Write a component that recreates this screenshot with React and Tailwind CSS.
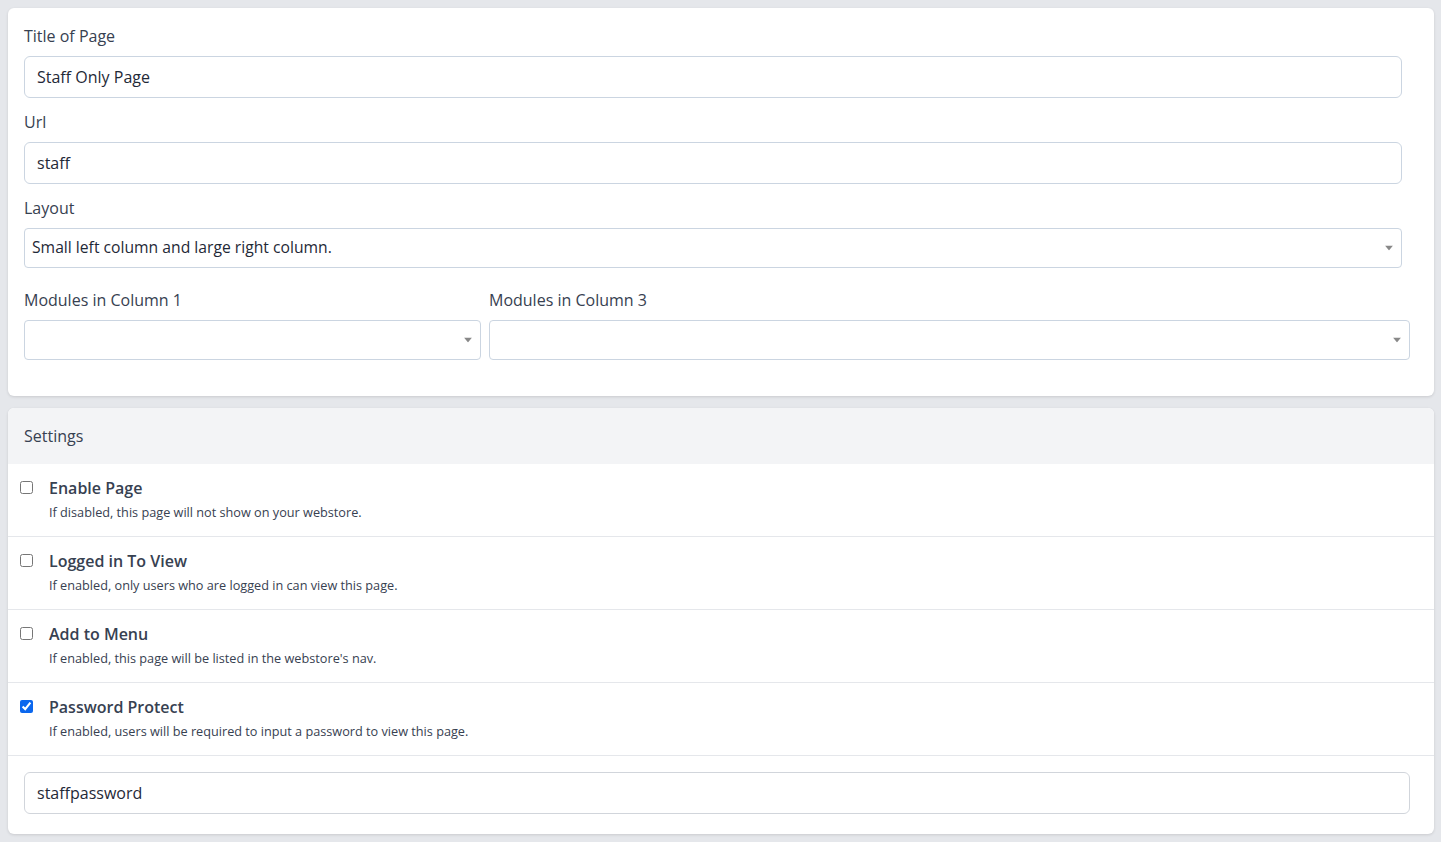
import { useState } from 'react'

const SETTINGS = [
  { id: 'enable', title: 'Enable Page', desc: 'If disabled, this page will not show on your webstore.', checked: false },
  { id: 'logged', title: 'Logged in To View', desc: 'If enabled, only users who are logged in can view this page.', checked: false },
  { id: 'menu', title: 'Add to Menu', desc: "If enabled, this page will be listed in the webstore's nav.", checked: false },
  { id: 'password', title: 'Password Protect', desc: 'If enabled, users will be required to input a password to view this page.', checked: true },
]

function Caret() {
  return (
    <svg width="8" height="5" viewBox="0 0 8 5" className="absolute right-[8px] top-1/2 -translate-y-1/2">
      <path d="M0 0h8L4 5z" fill="#888" />
    </svg>
  )
}

function Select({ value, className = '' }) {
  return (
    <div className={'relative h-[40px] rounded border border-[#cbd5e1] bg-white flex items-center px-[7px] text-[15.7px] text-[#1f2937] ' + className}>
      <span>{value}</span>
      <Caret />
    </div>
  )
}

export default function App() {
  const [settings, setSettings] = useState(SETTINGS)
  const toggle = id => setSettings(s => s.map(x => (x.id === id ? { ...x, checked: !x.checked } : x)))

  return (
    <div className="min-h-[842px] bg-[#e5e7eb] pl-[8px] pr-[7px] py-[8px] font-['Open_Sans',sans-serif] text-[#374151]">
      {/* Page fields */}
      <div className="bg-white rounded-md shadow-[0_1px_3px_rgba(0,0,0,0.12)] pt-[16px] pb-[36px] px-[16px]">
        <label className="block text-[16px] leading-[24px] mb-[8px]">Title of Page</label>
        <input
          defaultValue="Staff Only Page"
          className="w-[1378px] h-[42px] rounded-md border border-[#cbd5e1] px-[12px] text-[16px] text-[#1f2937] outline-none"
        />
        <label className="block text-[16px] leading-[24px] mt-[12px] mb-[8px]">Url</label>
        <input
          defaultValue="staff"
          className="w-[1378px] h-[42px] rounded-md border border-[#cbd5e1] px-[12px] text-[16px] text-[#1f2937] outline-none"
        />
        <label className="block text-[16px] leading-[24px] mt-[12px] mb-[8px]">Layout</label>
        <Select value="Small left column and large right column." className="w-[1378px]" />

        <div className="flex gap-[8px] mt-[20px]">
          <div className="w-[457px]">
            <label className="block text-[16px] leading-[24px] mb-[8px]">Modules in Column 1</label>
            <Select value="" />
          </div>
          <div className="w-[921px]">
            <label className="block text-[16px] leading-[24px] mb-[8px]">Modules in Column 3</label>
            <Select value="" />
          </div>
        </div>
      </div>

      {/* Settings */}
      <div className="mt-[12px] bg-white rounded-md shadow-[0_1px_3px_rgba(0,0,0,0.12)] overflow-hidden">
        <div className="h-[56px] bg-[#f3f4f6] px-[16px] flex items-center text-[16px]">Settings</div>
        {settings.map(item => (
          <div key={item.id} className="h-[73px] border-b border-[#e5e7eb] flex pl-[12px] pt-[13px]">
            <input
              type="checkbox"
              checked={item.checked}
              onChange={() => toggle(item.id)}
              className="w-[13px] h-[13px] mt-[4px] accent-[#0b67ee]"
            />
            <div className="ml-[16px]">
              <p className="text-[16px] font-semibold leading-[22px] text-[#374151]">{item.title}</p>
              <p className="text-[12.7px] leading-[16px] mt-[5px] text-[#374151]">{item.desc}</p>
            </div>
          </div>
        ))}
        <div className="pl-[16px] pr-[24px] pt-[16px] pb-[20px]">
          <input
            defaultValue="staffpassword"
            className="w-full h-[42px] rounded-md border border-[#d1d5db] px-[12px] text-[16px] text-[#1f2937] outline-none"
          />
        </div>
      </div>
    </div>
  )
}
